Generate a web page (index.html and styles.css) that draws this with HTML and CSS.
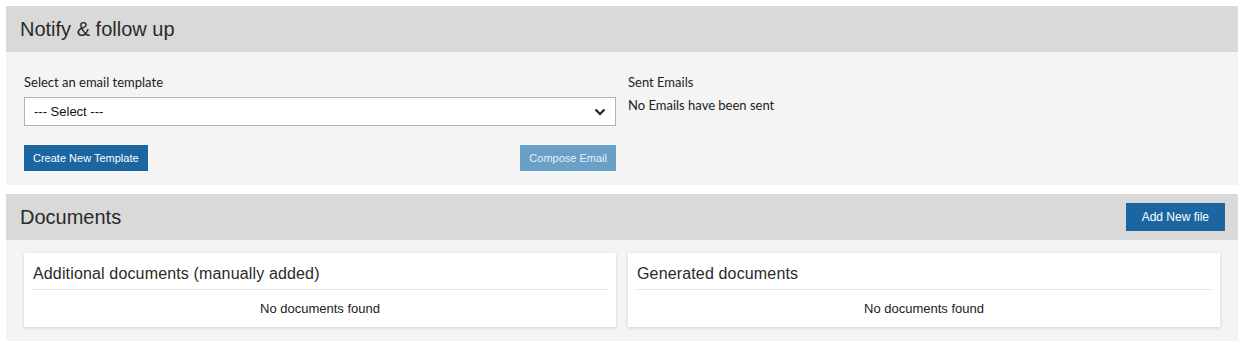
FILE: index.html
```html
<!DOCTYPE html>
<html>
<head>
<meta charset="utf-8">
<link rel="stylesheet" href="styles.css">
</head>
<body>
<section class="panel">
  <div class="panel-head"><h2>Notify &amp; follow up</h2></div>
  <div class="panel-body cols">
    <div class="col">
      <label class="label">Select an email template</label>
      <div class="select">
        <span>--- Select ---</span>
        <svg class="chev" width="12" height="8" viewBox="0 0 12 8"><path d="M1.5 1.5 L6 6 L10.5 1.5" fill="none" stroke="#222" stroke-width="2.2"/></svg>
      </div>
      <div class="actions">
        <button class="btn">Create New Template</button>
        <button class="btn disabled">Compose Email</button>
      </div>
    </div>
    <div class="col">
      <div class="label">Sent Emails</div>
      <div class="sent">No Emails have been sent</div>
    </div>
  </div>
</section>
<section class="panel">
  <div class="panel-head"><h2>Documents</h2><button class="btn add">Add New file</button></div>
  <div class="panel-body cols docs">
    <div class="card">
      <h3>Additional documents (manually added)</h3>
      <p>No documents found</p>
    </div>
    <div class="card">
      <h3>Generated documents</h3>
      <p>No documents found</p>
    </div>
  </div>
</section>
</body>
</html>
```
FILE: styles.css
```css
* { box-sizing: border-box; }
body { margin: 6px 10px 6px 6px; background: #fff; font-family: "Liberation Sans", Arial, sans-serif; color: #222; }
.panel { margin-bottom: 9px; }
.panel-head { background: #d9d9d9; height: 46px; display: flex; align-items: center; justify-content: space-between; padding: 0 13px 0 14px; }
.panel-head h2 { margin: 0; font-weight: normal; font-size: 20px; color: #2a2a2a; }
.panel-body { background: #f4f4f4; }
.cols { display: grid; grid-template-columns: 592px 592px; column-gap: 12px; padding: 0 18px; }
.panel-body.cols:not(.docs) { padding-top: 22px; padding-bottom: 14px; height: 133px; }
.label { display: block; font-family: Lato, "Open Sans", sans-serif; font-size: 13px; color: #222; line-height: 16px; margin-bottom: 7px; }
.select { height: 29px; background: #fff; border: 1px solid #b3b3b3; display: flex; align-items: center; justify-content: space-between; padding: 0 9px 0 9px; font-size: 13px; color: #111; }
.actions { display: flex; justify-content: space-between; margin-top: 19px; }
.btn { border: none; background: #1b65a0; color: #fff; font-family: "Liberation Sans", Arial, sans-serif; font-size: 11px; height: 26px; padding: 0 9px; }
.btn.disabled { background: #6a9fc7; color: #e8f0f7; }
.btn.add { height: 28px; padding: 0 16px; font-size: 12px; }
.sent { font-family: Lato, "Open Sans", sans-serif; font-size: 13px; color: #222; margin-top: 2px; }
.docs { padding-top: 13px; padding-bottom: 14px; }
.card { background: #fff; box-shadow: 0 1px 3px rgba(0,0,0,0.15); padding: 0 9px; height: 74px; }
.card h3 { margin: 0; font-weight: normal; font-size: 16px; letter-spacing: 0.15px; color: #2a2a2a; height: 37px; padding-top: 4px; line-height: 33px; border-bottom: 1px solid #e3e3e3; }
.card p { margin: 0; padding-top: 1px; text-align: center; font-size: 13px; line-height: 36px; color: #222; }
```
